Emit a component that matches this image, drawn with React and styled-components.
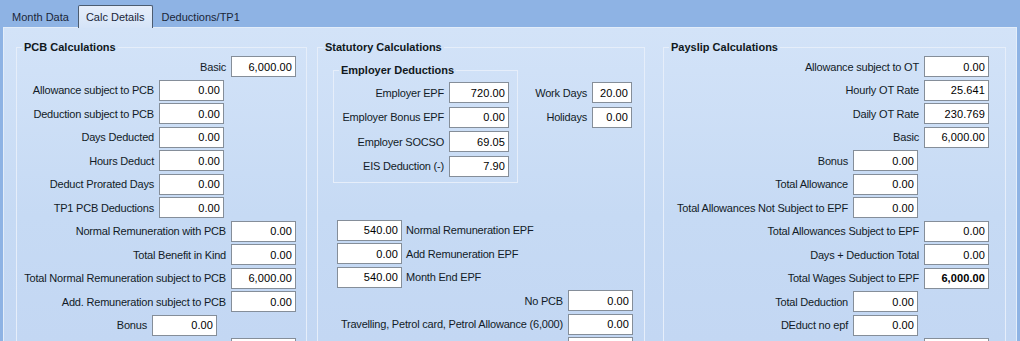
import React from 'react';
import styled, { createGlobalStyle } from 'styled-components';

const GlobalStyle = createGlobalStyle`
  html, body {
    margin: 0;
    padding: 0;
    background: #8eb3e4;
  }
  body {
    font-family: 'Liberation Sans', Arial, sans-serif;
    font-size: 11px;
    color: #121b27;
  }
`;

const Window = styled.div`
  width: 1020px;
  height: 341px;
  overflow: hidden;
  background: #8eb3e4;
  display: flex;
  flex-direction: column;
`;

const TabStrip = styled.div`
  height: 27px;
  flex-shrink: 0;
  display: flex;
  align-items: flex-end;
  padding-left: 3px;
  box-sizing: border-box;
`;

const Tab = styled.div`
  height: ${(p) => (p.$active ? '23px' : '21px')};
  padding: 0 ${(p) => (p.$active ? '7px' : '8px')};
  margin-bottom: ${(p) => (p.$active ? '-1px' : '0')};
  display: flex;
  align-items: center;
  font-size: 11px;
  color: #1a2638;
  box-sizing: border-box;
  position: relative;
  z-index: 1;
  border: ${(p) => (p.$active ? '1px solid #4c5c70' : '1px solid transparent')};
  border-bottom: none;
  border-radius: 2px 2px 0 0;
  background: ${(p) => (p.$active ? 'linear-gradient(#e6eefa, #d5e4f8)' : 'transparent')};
`;

const Panel = styled.div`
  flex: 1;
  min-height: 0;
  overflow: hidden;
  margin: 0 3px;
  border-left: 1px solid #e3edf9;
  border-right: 1px solid #e3edf9;
  border-top: 1px solid #e3edf9;
  background: linear-gradient(#d3e3f8, #c6daf4 60%, #c3d7f3);
  display: flex;
  align-items: flex-start;
  padding: 13px 0 0 12px;
`;

const Group = styled.fieldset`
  margin: 0 ${(p) => p.$gap || 0}px 0 0;
  padding: 2px 0 0;
  width: ${(p) => p.$width}px;
  height: 330px;
  flex-shrink: 0;
  box-sizing: border-box;
  border: 1px solid #e6eefa;
  min-width: 0;
  display: flex;
  flex-direction: column;
`;

const Legend = styled.legend`
  margin-left: 5px;
  padding: 0 2px;
  font-weight: bold;
  font-size: 11px;
  line-height: 13px;
  color: #101820;
`;

const SubGroup = styled.fieldset`
  margin: 0 0 0 15px;
  padding: 5px 0 5px;
  width: 185px;
  box-sizing: border-box;
  border: 1px solid #e6eefa;
  min-width: 0;
`;

const Stack = styled.div`
  display: flex;
  flex-direction: column;
  gap: ${(p) => p.$gap || 2.5}px;
  margin-top: ${(p) => p.$top || 0}px;
`;

const Row = styled.div`
  height: 21px;
  flex-shrink: 0;
  display: flex;
  align-items: center;
  justify-content: ${(p) => (p.$lead ? 'flex-start' : 'flex-end')};
  gap: ${(p) => (p.$lead ? 4 : 5)}px;
  padding-right: ${(p) => p.$pad || 0}px;
  padding-left: ${(p) => p.$left || 0}px;
`;

const Label = styled.span`
  white-space: nowrap;
  letter-spacing: -0.2px;
`;

const Field = styled.div`
  width: ${(p) => p.$w || 65}px;
  height: 21px;
  box-sizing: border-box;
  background: #fff;
  border: 1px solid #858e99;
  display: flex;
  align-items: center;
  justify-content: flex-end;
  padding-right: 3px;
  color: #000;
  font-weight: ${(p) => (p.$bold ? 'bold' : 'normal')};
  letter-spacing: 0.1px;
`;

const TopSection = styled.div`
  display: flex;
  align-items: flex-start;
  margin-top: 8px;
`;

const SideColumn = styled.div`
  flex: 1;
  margin-top: 18px;
`;

const Line = ({ label, value, pad, w, bold }) => (
  <Row $pad={pad}>
    {label && <Label>{label}</Label>}
    <Field $w={w} $bold={bold}>{value}</Field>
  </Row>
);

const LeadLine = ({ label, value, left }) => (
  <Row $lead $left={left}>
    <Field>{value}</Field>
    <Label>{label}</Label>
  </Row>
);

const pcb = [
  ['Basic', '6,000.00', 10],
  ['Allowance subject to PCB', '0.00', 82],
  ['Deduction subject to PCB', '0.00', 82],
  ['Days Deducted', '0.00', 82],
  ['Hours Deduct', '0.00', 82],
  ['Deduct Prorated Days', '0.00', 82],
  ['TP1 PCB Deductions', '0.00', 82],
  ['Normal Remuneration with PCB', '0.00', 10],
  ['Total Benefit in Kind', '0.00', 10],
  ['Total Normal Remuneration subject to PCB', '6,000.00', 10],
  ['Add. Remuneration subject to PCB', '0.00', 10],
  ['Bonus', '0.00', 89],
  ['', '', 10],
];

const employer = [
  ['Employer EPF', '720.00'],
  ['Employer Bonus EPF', '0.00'],
  ['Employer SOCSO', '69.05'],
  ['EIS Deduction (-)', '7.90'],
];

const payslip = [
  ['Allowance subject to OT', '0.00', 16],
  ['Hourly OT Rate', '25.641', 16],
  ['Daily OT Rate', '230.769', 16],
  ['Basic', '6,000.00', 16],
  ['Bonus', '0.00', 87],
  ['Total Allowance', '0.00', 87],
  ['Total Allowances Not Subject to EPF', '0.00', 87],
  ['Total Allowances Subject to EPF', '0.00', 16],
  ['Days + Deduction Total', '0.00', 16],
  ['Total Wages Subject to EPF', '6,000.00', 16, true],
  ['Total Deduction', '0.00', 87],
  ['DEduct no epf', '0.00', 87],
  ['', '', 16],
];

export default function App() {
  return (
    <>
      <GlobalStyle />
      <Window>
        <TabStrip>
          <Tab>Month Data</Tab>
          <Tab $active>Calc Details</Tab>
          <Tab>Deductions/TP1</Tab>
        </TabStrip>
        <Panel>
          <Group $width={291} $gap={10}>
            <Legend>PCB Calculations</Legend>
            <Stack>
              {pcb.map(([l, v, p], i) => (
                <Line key={i} label={l} value={v} pad={p} />
              ))}
            </Stack>
          </Group>

          <Group $width={328} $gap={18}>
            <Legend>Statutory Calculations</Legend>
            <TopSection>
              <SubGroup>
                <Legend>Employer Deductions</Legend>
                <Stack $gap={3.5}>
                  {employer.map(([l, v]) => (
                    <Line key={l} label={l} value={v} pad={8} w={60} />
                  ))}
                </Stack>
              </SubGroup>
              <SideColumn>
                <Stack $gap={3.5}>
                  <Line label="Work Days" value="20.00" pad={12} w={40} />
                  <Line label="Holidays" value="0.00" pad={12} w={40} />
                </Stack>
              </SideColumn>
            </TopSection>
            <Stack $top={37}>
              <LeadLine left={19} label="Normal Remuneration EPF" value="540.00" />
              <LeadLine left={19} label="Add Remuneration EPF" value="0.00" />
              <LeadLine left={19} label="Month End EPF" value="540.00" />
              <Line label="No PCB" value="0.00" pad={11} />
              <Line label="Travelling, Petrol card, Petrol Allowance (6,000)" value="0.00" pad={11} />
              <Line label="" value="" pad={11} />
            </Stack>
          </Group>

          <Group $width={343}>
            <Legend>Payslip Calculations</Legend>
            <Stack>
              {payslip.map(([l, v, p, b], i) => (
                <Line key={i} label={l} value={v} pad={p} bold={b} />
              ))}
            </Stack>
          </Group>
        </Panel>
      </Window>
    </>
  );
}
